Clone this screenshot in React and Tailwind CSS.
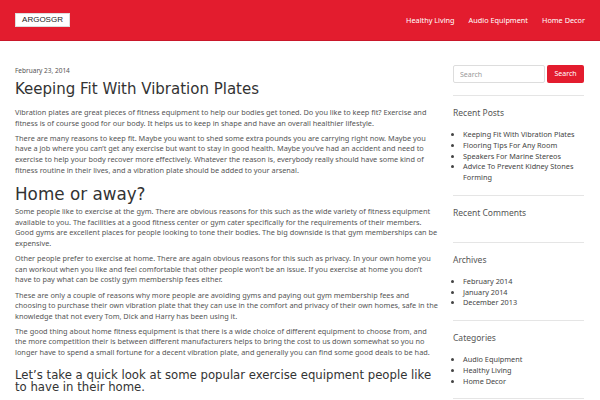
import React from 'react';

const nav = ['Healthy Living', 'Audio Equipment', 'Home Decor'];

const widgets = [
  {
    title: 'Recent Posts',
    items: [
      'Keeping Fit With Vibration Plates',
      'Flooring Tips For Any Room',
      'Speakers For Marine Stereos',
      'Advice To Prevent Kidney Stones Forming',
    ],
  },
  { title: 'Recent Comments', items: [] },
  { title: 'Archives', items: ['February 2014', 'January 2014', 'December 2013'] },
  { title: 'Categories', items: ['Audio Equipment', 'Healthy Living', 'Home Decor'] },
];

const body = { fontFamily: '"Noto Sans", "Open Sans", sans-serif' };
const head = { fontFamily: '"DejaVu Sans", sans-serif' };

const P = ({ children }) => (
  <p className="text-[7.35px] leading-[10.6px] text-[#555] mb-[4.6px]">{children}</p>
);

export default function App() {
  return (
    <div className="w-[600px] h-[400px] overflow-hidden bg-white" style={body}>
      <header className="h-[41px] bg-[#e31c2e] border-b border-[#c9172a] flex items-center justify-between px-[15px]">
        <div
          className="bg-white border border-[#ddd] h-[14px] w-[55px] flex items-center justify-center text-[8px] text-[#222]"
          style={{ fontFamily: '"Liberation Sans", Arial, sans-serif' }}
        >
          ARGOSGR
        </div>
        <nav className="flex gap-[14px] text-[7.3px] text-white">
          {nav.map(n => (
            <span key={n}>{n}</span>
          ))}
        </nav>
      </header>

      <div className="flex px-[15px] gap-[15px]">
        <main className="w-[423px] pt-[25px]">
          <div className="text-[6.5px] leading-[10px] text-[#555] mb-[4px]">February 23, 2014</div>
          <h1 className="text-[15px] leading-[18px] text-[#333] mb-[9px]" style={head}>
            Keeping Fit With Vibration Plates
          </h1>
          <P>
            Vibration plates are great pieces of fitness equipment to help our bodies get toned. Do you like to keep fit? Exercise and fitness is of course good for our body. It helps us to keep in shape and have an overall healthier lifestyle.
          </P>
          <P>
            There are many reasons to keep fit. Maybe you want to shed some extra pounds you are carrying right now. Maybe you have a job where you can’t get any exercise but want to stay in good health. Maybe you’ve had an accident and need to exercise to help your body recover more effectively. Whatever the reason is, everybody really should have some kind of fitness routine in their lives, and a vibration plate should be added to your arsenal.
          </P>
          <h2 className="text-[16.8px] leading-[20px] text-[#333] mt-[9px] mb-[2px]" style={head}>
            Home or away?
          </h2>
          <P>
            Some people like to exercise at the gym. There are obvious reasons for this such as the wide variety of fitness equipment available to you. The facilities at a good fitness center or gym cater specifically for the requirements of their members. Good gyms are excellent places for people looking to tone their bodies. The big downside is that gym memberships can be expensive.
          </P>
          <P>
            Other people prefer to exercise at home. There are again obvious reasons for this such as privacy. In your own home you can workout when you like and feel comfortable that other people won’t be an issue. If you exercise at home you don’t have to pay what can be costly gym membership fees either.
          </P>
          <P>
            These are only a couple of reasons why more people are avoiding gyms and paying out gym membership fees and choosing to purchase their own vibration plate that they can use in the comfort and privacy of their own homes, safe in the knowledge that not every Tom, Dick and Harry has been using it.
          </P>
          <P>
            The good thing about home fitness equipment is that there is a wide choice of different equipment to choose from, and the more competition their is between different manufacturers helps to bring the cost to us down somewhat so you no longer have to spend a small fortune for a decent vibration plate, and generally you can find some good deals to be had.
          </P>
          <h2 className="text-[11.7px] leading-[12px] text-[#333] mt-[11px]" style={head}>
            Let’s take a quick look at some popular exercise equipment people like to have in their home.
          </h2>
        </main>

        <aside className="w-[131px] pt-[24px]">
          <div className="flex gap-[2px] pb-[12px] border-b border-[#e5e5e5]">
            <input
              className="w-[92px] h-[18px] border border-[#ddd] rounded-[2px] px-[6px] text-[7px] outline-none placeholder-[#999]"
              placeholder="Search"
            />
            <button className="flex-1 h-[18px] bg-[#e31c2e] text-white text-[7px] rounded-[2px]">
              Search
            </button>
          </div>
          {widgets.map(w => (
            <div key={w.title} className="border-b border-[#e5e5e5] pt-[11px] pb-[12px]">
              <div className="text-[8.5px] text-[#555] leading-[12px]">{w.title}</div>
              {w.items.length > 0 ? (
                <ul className="list-disc pl-[10px] mt-[10.3px] text-[7.3px] leading-[10.7px] text-[#444]">
                  {w.items.map(i => (
                    <li key={i}>{i}</li>
                  ))}
                </ul>
              ) : (
                <div className="h-[10.7px]" />
              )}
            </div>
          ))}
        </aside>
      </div>
    </div>
  );
}
